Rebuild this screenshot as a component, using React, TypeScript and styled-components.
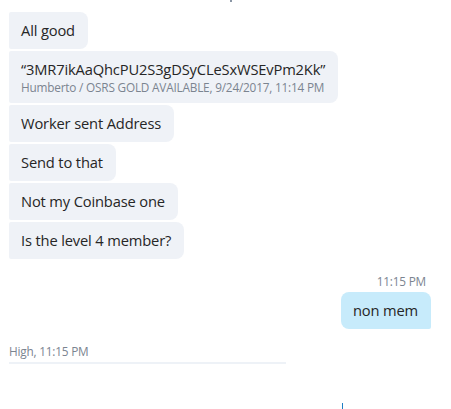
import React from "react";
import styled, { createGlobalStyle } from "styled-components";

const Global = createGlobalStyle`
  html, body { margin: 0; padding: 0; background: #ffffff; }
  body { font-family: "Open Sans", "Noto Sans", sans-serif; }
`;

const Page = styled.div`
  width: 451px;
  height: 409px;
  overflow: hidden;
  position: relative;
  box-sizing: border-box;
  padding: 12px 20px 0 9px;
  display: flex;
  flex-direction: column;
`;

const Thread = styled.div`
  display: flex;
  flex-direction: column;
  align-items: flex-start;
  gap: 2px;
`;

const Bubble = styled.div<{ $mine?: boolean }>`
  box-sizing: border-box;
  background: ${(p) => (p.$mine ? "#c7ebfb" : "#eff2f7")};
  color: #262626;
  border-radius: ${(p) => (p.$mine ? "8px 8px 2px 8px" : "2px 8px 8px 2px")};
  padding: 8px 13px 8px 12px;
  font-size: 14.7px;
  line-height: 21px;
  letter-spacing: -0.15px;
`;

const Meta = styled.div`
  font-size: 11.8px;
  line-height: 15px;
  color: #7b8490;
  letter-spacing: -0.2px;
`;

const Outgoing = styled.div`
  display: flex;
  flex-direction: column;
  align-items: flex-end;
  margin-top: 15px;
  gap: 3px;
`;

const OutTime = styled(Meta)`
  padding-right: 5px;
`;

const Footer = styled.div`
  margin-top: 15px;
  width: 277px;
`;

const Divider = styled.div`
  margin-top: 3px;
  height: 2px;
  background: #eef2f7;
`;

const Caret = styled.div`
  position: absolute;
  left: 342px;
  top: 403px;
  width: 1px;
  height: 6px;
  background: #1e7fc4;
`;

const TopTick = styled.div`
  position: absolute;
  left: 230px;
  top: 0;
  width: 2px;
  height: 2px;
  background: #8a96a5;
`;

export default function App() {
  return (
    <>
      <Global />
      <Page>
        <TopTick />
        <Thread>
          <Bubble>All good</Bubble>
          <Bubble>
            “3MR7ikAaQhcPU2S3gDSyCLeSxWSEvPm2Kk”
            <Meta>Humberto / OSRS GOLD AVAILABLE, 9/24/2017, 11:14 PM</Meta>
          </Bubble>
          <Bubble>Worker sent Address</Bubble>
          <Bubble>Send to that</Bubble>
          <Bubble>Not my Coinbase one</Bubble>
          <Bubble>Is the level 4 member?</Bubble>
        </Thread>
        <Outgoing>
          <OutTime>11:15 PM</OutTime>
          <Bubble $mine>non mem</Bubble>
        </Outgoing>
        <Footer>
          <Meta>High, 11:15 PM</Meta>
          <Divider />
        </Footer>
        <Caret />
      </Page>
    </>
  );
}
